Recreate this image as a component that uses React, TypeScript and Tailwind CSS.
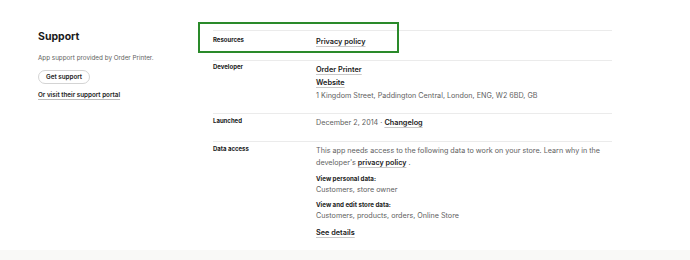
const linkCls = "font-semibold text-[#1a1a1a] underline decoration-[#c9c9c9] underline-offset-2";

function Row({ label, children, className = "" }: { label: string; children: React.ReactNode; className?: string }) {
  return (
    <div className={`flex border-t border-[#ebebeb] ${className}`}>
      <div className="w-[103px] shrink-0 text-[6px] leading-[7px] font-bold text-[#1a1a1a]">{label}</div>
      <div className="flex-1 text-[7.2px] text-[#616161]">{children}</div>
    </div>
  );
}

export default function App() {
  return (
    <div className="relative w-[690px] h-[260px] overflow-hidden bg-white" style={{ fontFamily: "Inter, 'Liberation Sans', sans-serif" }}>
      <div className="flex h-[250px] pl-[38px] pt-[30px]">
        {/* support column */}
        <div className="w-[175px] shrink-0 flex flex-col items-start">
          <h2 className="text-[10.5px] leading-[14px] font-bold text-[#1a1a1a]">Support</h2>
          <p className="mt-[9px] text-[6.3px] leading-[10px] text-[#616161]">App support provided by Order Printer.</p>
          <button className="mt-[7px] h-[14px] px-[7px] rounded-full border border-[#d4d4d4] text-[6.3px] leading-[10px] font-semibold text-[#1a1a1a]">
            Get support
          </button>
          <div className="mt-[6px] text-[6.3px] leading-[10px] font-semibold text-[#1a1a1a] underline decoration-[#bdbdbd] underline-offset-2">
            Or visit their support portal
          </div>
        </div>

        {/* details */}
        <div className="w-[399px]">
          <Row label="Resources" className="h-[30px] pt-[5px] leading-[12px]">
            <span className={`${linkCls} text-[7.3px]`}>Privacy policy</span>
          </Row>
          <Row label="Developer" className="h-[53px] pt-[2px] leading-[13px]">
            <div className={`${linkCls} text-[7.3px]`}>Order Printer</div>
            <div className={`${linkCls} text-[7.3px]`}>Website</div>
            <div>1 Kingdom Street, Paddington Central, London, ENG, W2 6BD, GB</div>
          </Row>
          <Row label="Launched" className="h-[28px] pt-[3px] leading-[12px]">
            <span>December 2, 2014 · </span>
            <span className={`${linkCls} text-[7.3px]`}>Changelog</span>
          </Row>
          <Row label="Data access" className="pt-[3px] leading-[12px]">
            <p>
              <span>This app needs access to the following data to work on your store. Learn why in the</span>
              <br />
              <span>developer's </span>
              <span className={linkCls}>privacy policy</span>
              <span> .</span>
            </p>
            <div className="mt-[5px] text-[6.2px] font-bold text-[#1a1a1a] leading-[10px]">View personal data:</div>
            <div className="leading-[11px]">Customers, store owner</div>
            <div className="mt-[5px] text-[6.2px] font-bold text-[#1a1a1a] leading-[10px]">View and edit store data:</div>
            <div className="leading-[11px]">Customers, products, orders, Online Store</div>
            <div className={`${linkCls} mt-[6px] text-[7.3px]`}>See details</div>
          </Row>
        </div>
      </div>
      <div className="h-[10px] bg-[#f9f9f7]" />

      {/* annotation box */}
      <div className="absolute left-[198px] top-[22px] w-[201px] h-[31px] border-2 border-[#2a8a2a]" />
    </div>
  );
}
